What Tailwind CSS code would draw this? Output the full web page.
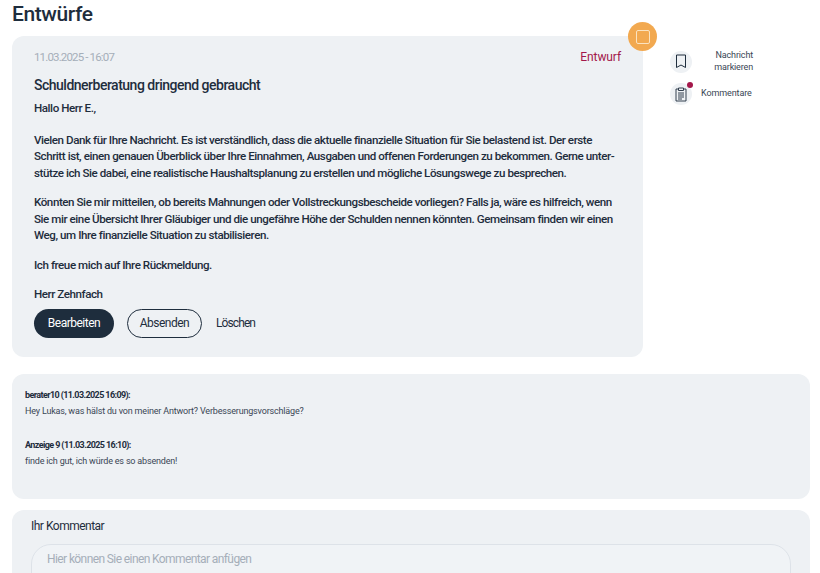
<!DOCTYPE html>
<html lang="de">
<head>
  <meta charset="UTF-8">
  <title>Entwürfe</title>
  <script src="https://cdn.jsdelivr.net/npm/@tailwindcss/browser@4"></script>
</head>
<body class="bg-white h-[573px] overflow-hidden font-['Roboto',sans-serif] text-[#1e2d3d]">

  <main class="pl-3 pr-[10px]">
    <h1 class="h-9 pt-[1px] text-[21px] leading-[26px] font-medium tracking-[-0.4px]">Entwürfe</h1>

    <!-- Entwurf + Aktionen -->
    <div class="flex">
      <section class="relative w-[631px] h-[321px] bg-[#eef1f4] rounded-xl pl-[22px] pr-[22px] pt-[13px]">
        <div class="flex justify-between items-center h-4">
          <span class="pt-[1px] text-[11.5px] text-[#a5aeb9] tracking-[-0.85px]">11.03.2025 - 16:07</span>
          <span class="text-[12px] text-[#a3174a] tracking-[-0.1px]">Entwurf</span>
        </div>
        <h2 class="mt-[10px] text-[14px] leading-[20px] font-medium tracking-[-0.5px]">Schuldnerberatung dringend gebraucht</h2>
        <div class="mt-[5px] text-[11.6px] leading-[16.5px] font-medium tracking-[-0.44px] whitespace-nowrap">
          <p>Hallo Herr E.,</p>
          <p class="mt-[15px]">Vielen Dank für Ihre Nachricht. Es ist verständlich, dass die aktuelle finanzielle Situation für Sie belastend ist. Der erste<br>Schritt ist, einen genauen Überblick über Ihre Einnahmen, Ausgaben und offenen Forderungen zu bekommen. Gerne unter-<br>stütze ich Sie dabei, eine realistische Haushaltsplanung zu erstellen und mögliche Lösungswege zu besprechen.</p>
          <p class="mt-[13px]">Könnten Sie mir mitteilen, ob bereits Mahnungen oder Vollstreckungsbescheide vorliegen? Falls ja, wäre es hilfreich, wenn<br>Sie mir eine Übersicht Ihrer Gläubiger und die ungefähre Höhe der Schulden nennen könnten. Gemeinsam finden wir einen<br>Weg, um Ihre finanzielle Situation zu stabilisieren.</p>
          <p class="mt-[13px]">Ich freue mich auf Ihre Rückmeldung.</p>
          <p class="mt-[13px]">Herr Zehnfach</p>
        </div>
        <div class="mt-[6px] flex items-center text-[12px] tracking-[-0.5px]">
          <button class="h-[29px] w-[80px] rounded-full bg-[#1e2d3d] text-white">Bearbeiten</button>
          <button class="ml-[13px] h-[29px] w-[75px] rounded-full border border-[#1e2d3d]">Absenden</button>
          <button class="ml-[14px] tracking-[-0.9px]">Löschen</button>
        </div>
        <div class="absolute left-[616px] top-[-14px] w-[29px] h-[29px] rounded-full bg-[#f2a950] flex items-center justify-center">
          <div class="w-[14px] h-[14px] rounded-[2px] border-[1.5px] border-[#fbe3c0]"></div>
        </div>
      </section>

      <aside class="ml-[27px] pt-[14px] w-[83px] text-[#3a4654] text-[9px] leading-[11.5px]">
        <div class="flex items-center">
          <div class="w-[22px] h-[22px] shrink-0 rounded-full bg-[#eef1f4] flex items-center justify-center">
            <svg class="w-[12px] h-[15px]" viewBox="0 0 12 15" fill="none" stroke="#1e2d3d" stroke-width="1"><path d="M1.500 1h9v12.500L6 11l-4.500 2.500z"/></svg>
          </div>
          <span class="ml-auto text-right tracking-[-0.15px]">Nachricht<br>markieren</span>
        </div>
        <div class="mt-[10px] flex items-center">
          <div class="relative w-[22px] h-[22px] shrink-0 rounded-full bg-[#eef1f4] flex items-center justify-center">
            <svg class="w-[12px] h-[15px]" viewBox="0 0 12 15" fill="none" stroke="#1e2d3d" stroke-width="0.9"><path d="M3.500 2H1v12h10V2H8.500"/><path d="M3.500 1h5v2.500h-5z" fill="#eef1f4"/><path d="M3 6h6M3 8h6M3 10h6M3 12h4"/></svg>
            <span class="absolute right-[-1px] top-[-1px] w-[6px] h-[6px] rounded-full bg-[#a3174a]"></span>
          </div>
          <span class="ml-[9px] tracking-[-0.1px]">Kommentare</span>
        </div>
      </aside>
    </div>

    <!-- Kommentare -->
    <section class="mt-[17px] h-[125px] bg-[#eef1f4] rounded-xl pl-[13px] pt-[14px] text-[9px] leading-[15px]">
      <p class="font-bold tracking-[-0.6px]">berater10 (11.03.2025 16:09):</p>
      <p class="mt-[1px] text-[#3a4654] tracking-[-0.18px]">Hey Lukas, was hälst du von meiner Antwort? Verbesserungsvorschläge?</p>
      <p class="mt-[19px] font-bold tracking-[-0.6px]">Anzeige 9 (11.03.2025 16:10):</p>
      <p class="mt-[1px] text-[#3a4654] tracking-[-0.18px]">finde ich gut, ich würde es so absenden!</p>
    </section>

    <!-- Eingabe -->
    <section class="mt-[11px] h-[63px] overflow-hidden bg-[#eef1f4] rounded-t-xl px-[19px] pt-[8px]">
      <label class="block text-[12px] leading-[16px] tracking-[-0.5px]">Ihr Kommentar</label>
      <div class="mt-[10px] h-[60px] rounded-[20px] border border-[#dde2e8] bg-[#f0f3f6] pl-[15px] pt-[6px] text-[12px] leading-[16px] text-[#a5aeb9] tracking-[-0.6px]">Hier können Sie einen Kommentar anfügen</div>
    </section>
  </main>

</body>
</html>
